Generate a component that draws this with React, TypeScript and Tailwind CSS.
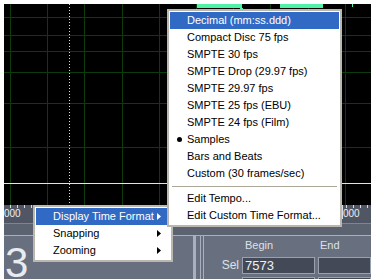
import React from "react";

const gridX = [6, 43, 80, 118, 155, 192, 229, 266, 304, 341];
const gridY = [13, 31, 47, 68, 99, 143];

const formats = [
  "Decimal (mm:ss.ddd)",
  "Compact Disc 75 fps",
  "SMPTE 30 fps",
  "SMPTE Drop (29.97 fps)",
  "SMPTE 29.97 fps",
  "SMPTE 25 fps (EBU)",
  "SMPTE 24 fps (Film)",
  "Samples",
  "Bars and Beats",
  "Custom (30 frames/sec)",
];

const Waveform = () => (
  <svg width="367" height="201" className="block shrink-0">
    <rect width="367" height="201" fill="#000" />
    {gridX.map((x) => (
      <line key={x} x1={x + 0.5} y1="0" x2={x + 0.5} y2="201" stroke="#0b3d0b" />
    ))}
    {gridY.map((y) => (
      <line key={y} x1="0" y1={y + 0.5} x2="367" y2={y + 0.5} stroke="#0b3d0b" />
    ))}
    <line x1="0" y1="179.5" x2="367" y2="179.5" stroke="#dfe8df" />
    <line x1="65.5" y1="0" x2="65.5" y2="201" stroke="#ffff00" strokeDasharray="1 2" />
    <rect x="193" y="0" width="45" height="4" fill="#4ff2a6" />
    <rect x="236" y="4" width="3" height="1" fill="#4ff2a6" />
    <rect x="276" y="0" width="43" height="4" fill="#4ff2a6" />
    <rect x="348" y="0" width="1" height="3" fill="#4ff2a6" />
  </svg>
);

const Arrow = ({ color }: { color: string }) => (
  <svg width="4" height="7" className="block">
    <polygon points="0,0 4,3.5 0,7" fill={color} />
  </svg>
);

const Ruler = () => (
  <div className="relative h-[18px] shrink-0 bg-[#505663]">
    <svg width="367" height="18" className="absolute left-0 top-0">
      {Array.from({ length: 52 }).map((_, i) => (
        <line key={i} x1={6 + i * 7 + 0.5} y1="0" x2={6 + i * 7 + 0.5} y2="3" stroke="#d8dce2" />
      ))}
      <line x1="338.5" y1="0" x2="338.5" y2="14" stroke="#d8dce2" />
    </svg>
    <span className="absolute left-[0px] top-[4px] text-[10px] leading-[10px] text-[#eceef2]">000</span>
    <span className="absolute left-[339px] top-[4px] text-[10px] leading-[10px] text-[#eceef2]">000</span>
  </div>
);

const Box = ({ children }: { children?: React.ReactNode }) => (
  <div className="h-[17px] border border-[#9aa1ad] bg-[#434956] px-[2px] text-[13px] leading-[15px] text-[#eef0f4]">
    {children}
  </div>
);

const Panel = () => (
  <div className="flex h-[43px] overflow-hidden bg-[#687080]">
    <div className="w-[189px] shrink-0 pl-[1px] pt-[11px] text-[42px] leading-[32px] text-[#e8ecf0]">3</div>
    <div className="w-[3px] shrink-0 bg-[#a9b0bc]" />
    <div className="w-[4px] shrink-0" />
    <div className="w-[1px] shrink-0 bg-[#a9b0bc]" />
    <div className="w-[2px] shrink-0" />
    <div className="w-[1px] shrink-0 bg-[#a9b0bc]" />
    <div className="grid flex-1 grid-cols-[35px_73px_1fr] grid-rows-[18px_17px_17px] gap-x-[3px] gap-y-[3px] text-[#dde1e8]">
      <div />
      <div className="pl-[3px] text-[11px] leading-[18px]">Begin</div>
      <div className="pl-[2px] text-[11px] leading-[18px]">End</div>
      <div className="text-right text-[12px] leading-[17px]">Sel</div>
      <Box>7573</Box>
      <Box />
      <div />
      <Box />
      <Box />
    </div>
  </div>
);

const Item = ({
  label,
  active,
  bullet,
  arrow,
}: {
  label: string;
  active?: boolean;
  bullet?: boolean;
  arrow?: boolean;
}) => (
  <div
    className={`relative flex h-[17px] items-center pl-[17px] pr-[9px] text-[11px] whitespace-nowrap ${
      active ? "bg-[#316ac5] text-white" : "text-black"
    }`}
  >
    {bullet && <span className="absolute left-[7px] top-[6px] h-[5px] w-[5px] rounded-full bg-black" />}
    <span className="flex-1">{label}</span>
    {arrow && <Arrow color={active ? "#ffffff" : "#000000"} />}
  </div>
);

export default function App() {
  return (
    <div className="relative h-[279px] w-[371px] overflow-hidden bg-white pl-1 pt-1 font-['Liberation_Sans',Arial,sans-serif]">
      <div className="flex h-[275px] flex-col">
        <Waveform />
        <Ruler />
        <div className="h-[12px] shrink-0 border-t border-[#7d8595] bg-[#5b6371]" />
        <div className="h-[1px] shrink-0 bg-[#a9b0bc]" />
        <Panel />
      </div>

      <div className="absolute left-[33px] top-[205px] w-[140px] border-2 border-[#b9b7af] bg-white p-[1px]">
        <Item label="Display Time Format" active arrow />
        <Item label="Snapping" arrow />
        <Item label="Zooming" arrow />
      </div>

      <div className="absolute left-[167px] top-[9px] w-[175px] border-2 border-[#b9b7af] bg-white p-[1px]">
        {formats.map((f, i) => (
          <Item key={f} label={f} active={i === 0} bullet={f === "Samples"} />
        ))}
        <div className="flex h-[8px] items-center px-[2px]">
          <div className="h-[1px] w-full bg-[#aca899]" />
        </div>
        <Item label="Edit Tempo..." />
        <Item label="Edit Custom Time Format..." />
      </div>
    </div>
  );
}
